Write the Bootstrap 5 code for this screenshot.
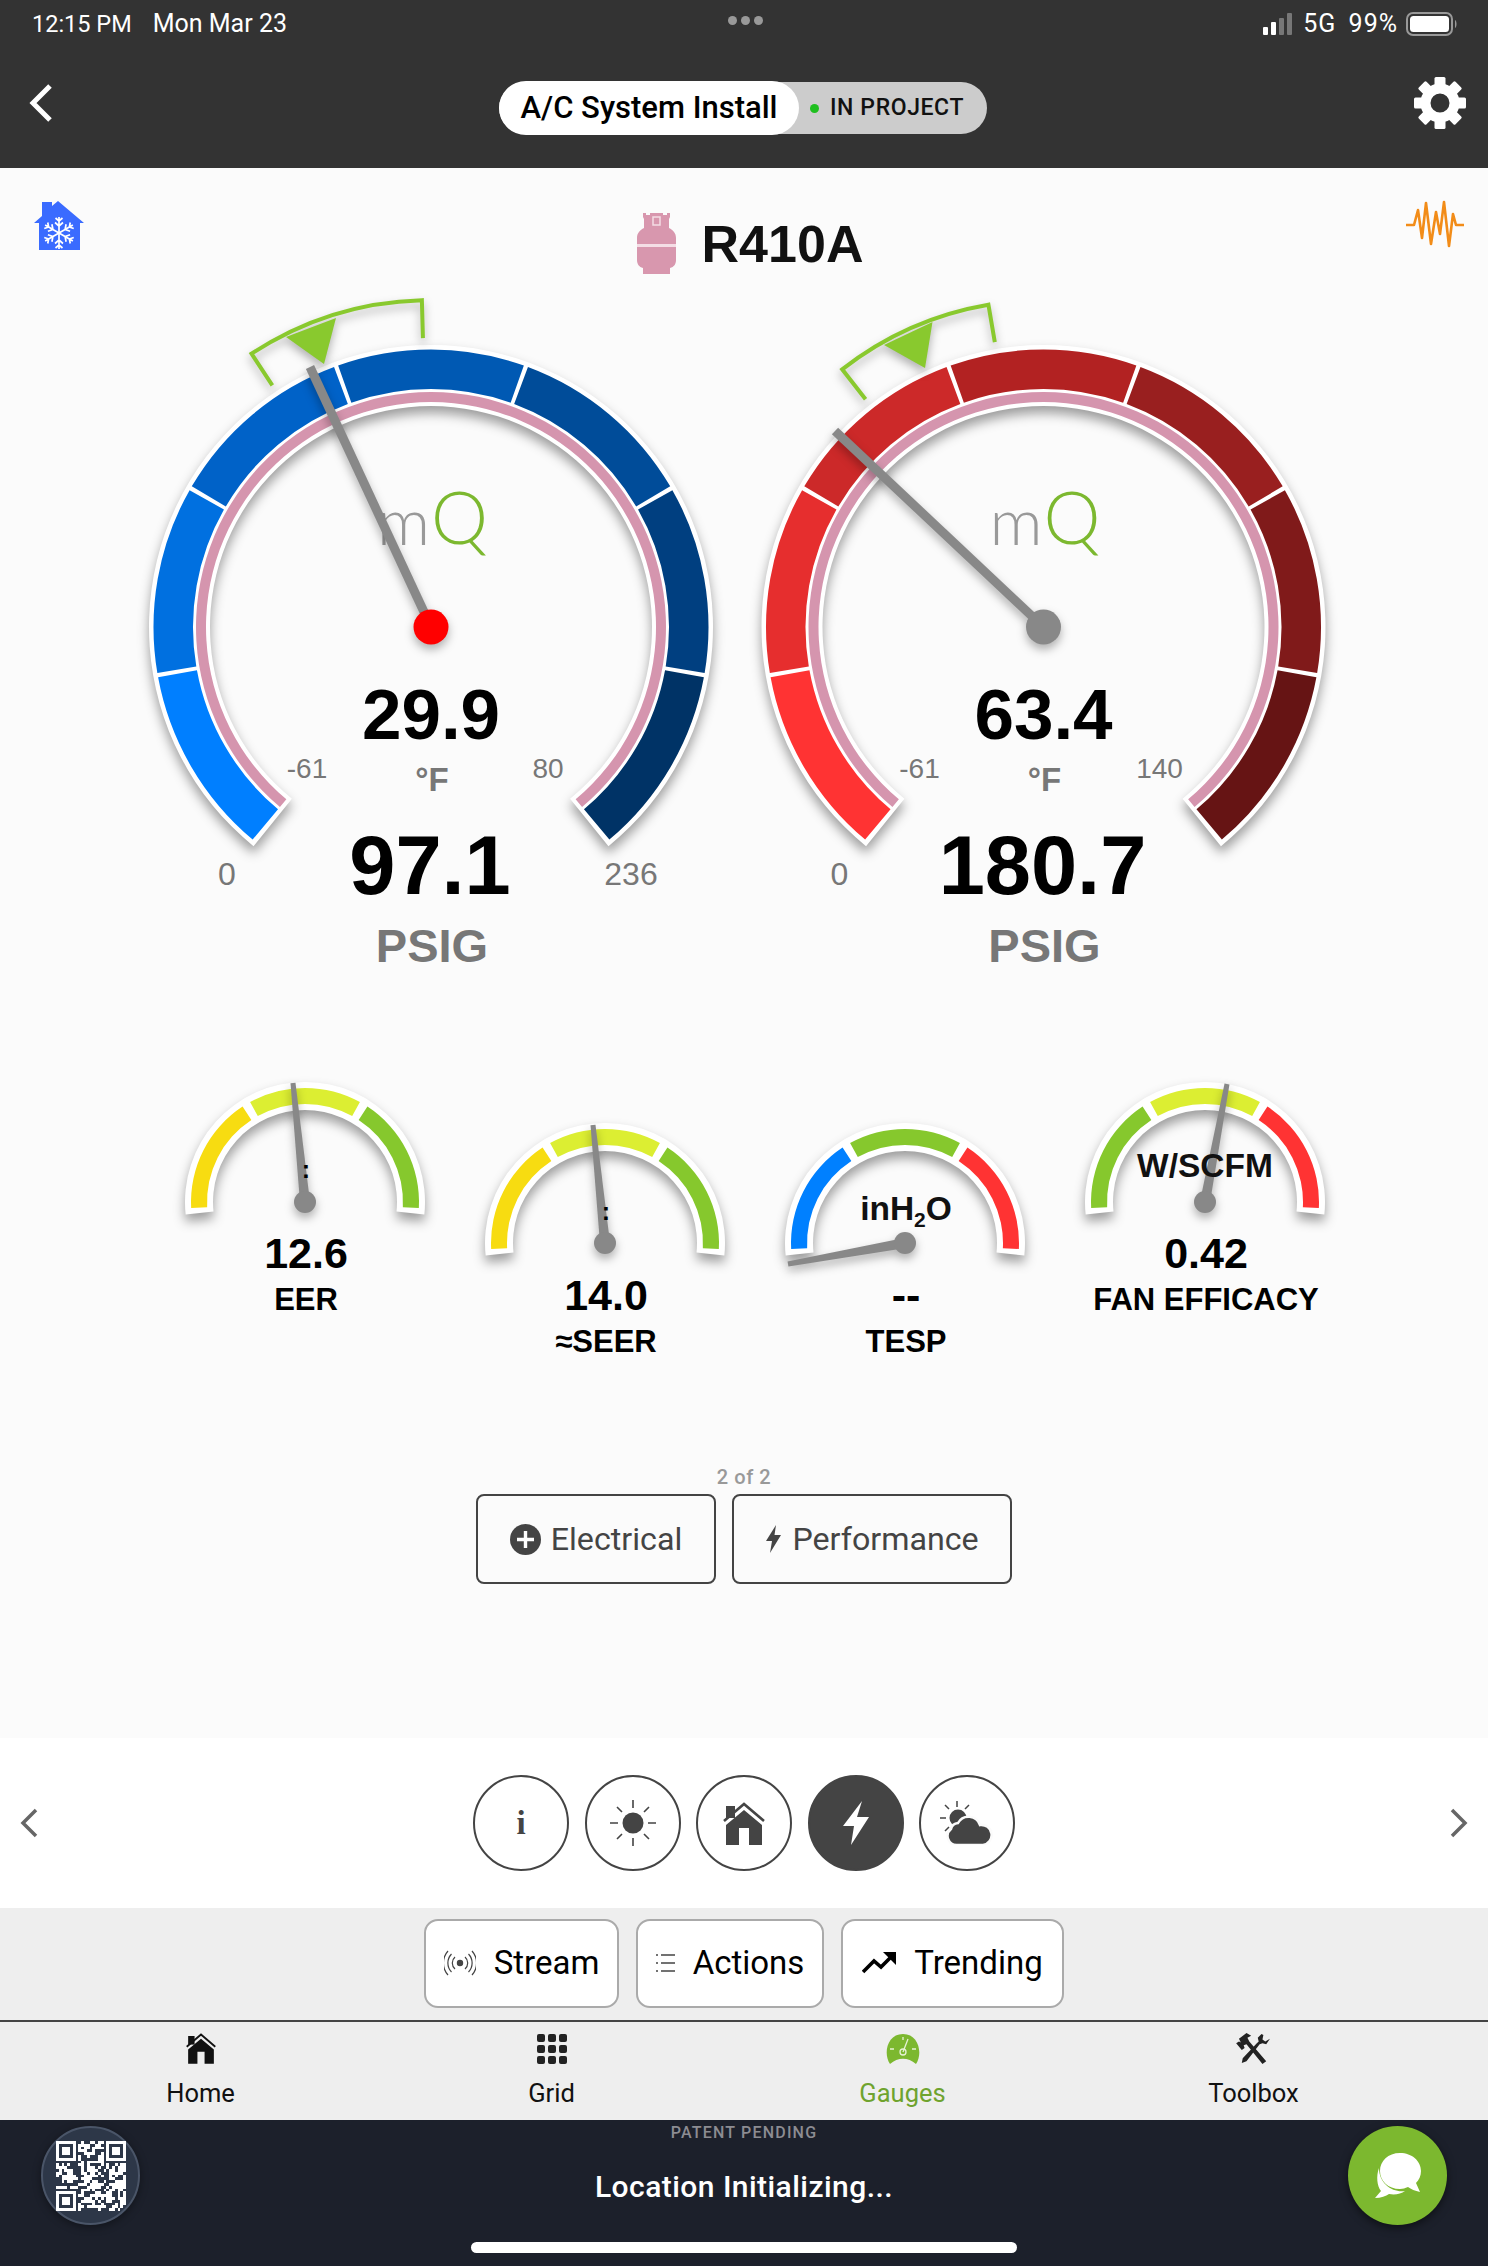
<!DOCTYPE html>
<html lang="en">
<head>
  <meta charset="UTF-8" />
  <meta name="viewport" content="width=device-width, initial-scale=1.0" />
  <title>Gauges</title>
  <link href="https://cdn.jsdelivr.net/npm/bootstrap@5.3.3/dist/css/bootstrap.min.css" rel="stylesheet" />
  <script src="https://cdn.jsdelivr.net/npm/bootstrap@5.3.3/dist/js/bootstrap.bundle.min.js"></script>
  <style>
    html, body { margin: 0; height: 2266px; overflow: hidden; }
    body { font-family: Roboto, "Liberation Sans", sans-serif; background: #fbfbfb; }
    .app-shell { width: 1488px; height: 2266px; }

    .top-bar { height: 168px; background: #333; color: #fff; flex: none; }
    .status-row { height: 48px; padding: 8px 30px 0 32px; font-size: 23.5px; line-height: 32px; }
    .status-time { width: 430px; white-space: pre; }
    .status-date { font-size: 25px; margin-left: 21px; }
    .status-dots { gap: 4px; }
    .status-dots i { width: 9px; height: 9px; border-radius: 50%; background: #999; display: block; }
    .status-right { width: 430px; }
    .status-net { font-size: 25px; letter-spacing: 1px; word-spacing: 5px; }
    .nav-row { height: 120px; padding: 0 22px 0 28px; }
    .nav-back { width: 52px; margin-bottom: 10px; }
    .nav-gear { width: 60px; margin-bottom: 10px; }
    .project-pill { background: #ccc; border-radius: 27px; height: 52px; width: 488px; }
    .project-name { background: #fff; color: #000; border-radius: 27px; height: 54px; width: 300px; font-size: 31px; font-weight: 500; margin: -1px 0; }
    .project-state { font-size: 23px; font-weight: 500; color: #111; letter-spacing: .6px; padding-left: 11px; }
    .project-dot { width: 9px; height: 9px; border-radius: 50%; background: #1fbf1f; margin-right: 11px; }

    .main-area { height: 1570px; background: #fbfbfb; flex: none; }
    .title-row { height: 112px; padding: 32px 24px 0 34px; }
    .title-mid { margin-top: 12px; gap: 25px; margin-left: 9px; }
    .title-text { font-family: "Liberation Sans", sans-serif; font-weight: 700; font-size: 52px; line-height: 60px; color: #111; }
    .big-row { padding-left: 125px; height: 720px; }
    .small-row { padding-left: 155px; margin-top: 60px; height: 310px; }
    .page-count { margin-top: 95px; font-size: 20px; font-weight: 500; color: #999; line-height: 24px; text-align: center; letter-spacing: .6px; }
    .mode-row { gap: 16px; margin-top: 5px; }
    .mode-btn { height: 90px; border: 2px solid #444; border-radius: 8px; color: #444; font-size: 32.2px; background: transparent; padding: 0; gap: 10px; }
    .mode-a { width: 240px; }
    .mode-b { width: 280px; gap: 10px; }

    .circle-bar { height: 170px; background: #fff; gap: 15.5px; padding: 0 18px; flex: none; }
    .circle-set { gap: 15.5px; }
    .round-btn { width: 96px; height: 96px; border: 2px solid #444; border-radius: 50%; background: #fff; color: #444; padding: 0; }
    .round-on { background: #444; }
    .round-i { font-family: "Liberation Serif", serif; font-weight: 700; font-size: 33px; line-height: 1; }

    .action-bar { height: 114px; background: #eee; border-bottom: 2px solid #444; gap: 17px; flex: none; padding-bottom: 2px; }
    .action-btn { height: 89px; background: #fff; border: 2px solid #aaa; border-radius: 14px; color: #000; font-size: 33px; padding: 0; gap: 18px; }
    .act-a { width: 195px; }
    .act-b { width: 188px; }
    .act-c { width: 223px; }

    .tab-bar { height: 98px; background: #eee; padding: 0 59px 0 25px; flex: none; }
    .tab-item { width: 351px; color: #111; font-size: 25.5px; line-height: 30px; padding-top: 11px; gap: 14px; }
    .tab-on { color: #6fa32e; }

    .foot-bar { height: 146px; background: #1c202b; color: #fff; padding: 6px 41px 0; flex: none; }
    .qr-disc { width: 99px; height: 99px; border-radius: 50%; background: #2d3748; border: 2px solid #4a5568; box-shadow: 0 2px 8px rgba(0,0,0,.4); }
    .chat-disc { width: 99px; height: 99px; border-radius: 50%; background: #7cb82f; box-shadow: 0 3px 8px rgba(0,0,0,.5); }
    .foot-mid { width: 546px; }
    .patent-text { font-size: 16px; font-weight: 500; letter-spacing: 1.2px; color: #8c8c92; line-height: 18px; margin-top: -2px; }
    .loc-text { font-size: 30px; font-weight: 500; line-height: 36px; margin-top: 27px; letter-spacing: .45px; }
    .home-bar { width: 546px; height: 11px; border-radius: 6px; background: #fff; margin-top: 37px; }

    .g-text { font-family: "Liberation Sans", sans-serif; text-anchor: middle; }
    .g-bold { font-weight: 700; }
    .g-temp { font-size: 71px; fill: #000; }
    .g-psi { font-size: 83px; fill: #000; }
    .g-unit { font-size: 33px; fill: #777; }
    .g-psig { font-size: 47px; fill: #777; }
    .g-lim { font-size: 32px; fill: #777; }
    .g-lim-sm { font-size: 28px; fill: #777; }
    .logo-m { font-family: Lato, sans-serif; font-weight: 300; font-size: 66px; fill: #999; }
    .logo-q { font-family: Lato, sans-serif; font-weight: 300; font-size: 72px; fill: #7cb82f; }
    .s-val { font-size: 43px; fill: #000; }
    .s-name { font-size: 31px; fill: #000; }
    .s-unit { font-size: 33.5px; fill: #111; }
    .s-sub { font-size: 21px; fill: #111; }
    .s-colon { font-size: 25px; fill: #000; }
    .ring-shadow { filter: drop-shadow(0 7px 6px rgba(0,0,0,.38)); }
    .hand-shadow { filter: drop-shadow(0 5px 5px rgba(0,0,0,.3)); }
  </style>
</head>
<body>
  <svg width="0" height="0" class="d-block position-absolute">
    <symbol id="i-home" viewBox="0 0 42 43">
      <path fill="currentColor" d="M3 43V23L21 8L39 23V43H26V26H16V43Z"/>
      <rect fill="currentColor" x="3" y="4" width="9" height="12"/>
      <path fill="none" stroke="currentColor" stroke-width="2.6" d="M1 19L21 2L41 19"/>
    </symbol>
  </svg>

  <div class="app-shell d-flex flex-column">
    <header class="top-bar">
      <div class="status-row d-flex align-items-start justify-content-between">
        <div class="status-time">12:15 PM<span class="status-date">Mon Mar 23</span></div>
        <div class="status-dots d-flex mt-2"><i></i><i></i><i></i></div>
        <div class="status-right d-flex justify-content-end align-items-center">
          <svg width="32" height="22" viewBox="0 0 32 22">
            <rect x="0" y="14" width="5" height="8" rx="1" fill="#fff"/>
            <rect x="8" y="9" width="5" height="13" rx="1" fill="#fff"/>
            <rect x="16" y="5" width="5" height="17" rx="1" fill="#777"/>
            <rect x="24" y="0" width="5" height="22" rx="1" fill="#777"/>
          </svg>
          <span class="status-net ms-2 me-2">5G 99%</span>
          <svg width="52" height="24" viewBox="0 0 52 24">
            <rect x="1" y="1" width="45" height="22" rx="6" fill="none" stroke="#999" stroke-width="2"/>
            <rect x="4" y="4" width="39" height="16" rx="3.5" fill="#fff"/>
            <path d="M49 8c2 1 2 7 0 8z" fill="#999"/>
          </svg>
        </div>
      </div>
      <div class="nav-row d-flex align-items-center justify-content-between">
        <div class="nav-back">
          <svg class="d-block" width="26" height="40" viewBox="0 0 26 40"><path d="M22 3L5 20L22 37" fill="none" stroke="#fff" stroke-width="5"/></svg>
        </div>
        <div class="project-pill d-flex align-items-center">
          <div class="project-name d-flex align-items-center justify-content-center">A/C System Install</div>
          <div class="project-state d-flex align-items-center"><span class="project-dot"></span>IN PROJECT</div>
        </div>
        <div class="nav-gear d-flex justify-content-end">
          <svg width="52" height="52" viewBox="-26 -26 52 52" fill="#fff">
            <circle r="14.5" fill="none" stroke="#fff" stroke-width="10"/>
            <rect x="-5.5" y="-26" width="11" height="10" rx="1.5"/>
            <rect x="-5.5" y="-26" width="11" height="10" rx="1.5" transform="rotate(45)"/>
            <rect x="-5.5" y="-26" width="11" height="10" rx="1.5" transform="rotate(90)"/>
            <rect x="-5.5" y="-26" width="11" height="10" rx="1.5" transform="rotate(135)"/>
            <rect x="-5.5" y="-26" width="11" height="10" rx="1.5" transform="rotate(180)"/>
            <rect x="-5.5" y="-26" width="11" height="10" rx="1.5" transform="rotate(225)"/>
            <rect x="-5.5" y="-26" width="11" height="10" rx="1.5" transform="rotate(270)"/>
            <rect x="-5.5" y="-26" width="11" height="10" rx="1.5" transform="rotate(315)"/>
          </svg>
        </div>
      </div>
    </header>

    <main class="main-area">
      <div class="title-row d-flex justify-content-between align-items-start">
        <svg width="50" height="50" viewBox="0 0 50 50" id="house-icon"></svg>
        <div class="title-mid d-flex align-items-center">
          <svg width="41" height="64" viewBox="0 0 41 64">
            <path fill="#d897ae" d="M7 1h3v2h4V1h13v2h4V1h3v4l-1 2v9c4 2 7 5 7 10v22c0 4-2 7-6 8v6H7v-6c-4-1-6-4-6-8V26c0-5 3-8 7-10V7L7 5z"/>
            <rect x="1" y="32" width="39" height="3" fill="#f4dde5"/>
            <rect x="17" y="5" width="7" height="8" fill="none" stroke="#f4dde5" stroke-width="1.5"/>
          </svg>
          <div class="title-text">R410A</div>
        </div>
        <svg width="58" height="48" viewBox="0 0 58 48"><path fill="none" stroke="#f28c18" stroke-width="2.6" stroke-linejoin="round" d="M0 25H8L12 10L16 38L20 3L25 44L30 12L34 34L38 2L43 46L47 14L50 25H58"/></svg>
      </div>

      <div class="big-row d-flex" id="big-gauges"></div>
      <div class="small-row d-flex" id="small-gauges"></div>

      <div class="page-count">2 of 2</div>
      <div class="mode-row d-flex justify-content-center">
        <button class="btn mode-btn mode-a d-flex align-items-center justify-content-center">
          <svg width="31" height="31" viewBox="0 0 31 31"><circle cx="15.5" cy="15.5" r="15.5" fill="#444"/><path d="M15.5 7v17M7 15.5h17" stroke="#fff" stroke-width="3.4"/></svg>
          Electrical
        </button>
        <button class="btn mode-btn mode-b d-flex align-items-center justify-content-center">
          <svg width="17" height="28" viewBox="0 0 17 28"><path fill="#444" d="M11 0L1 16H7L5 28L16 10H9.500Z"/></svg>
          Performance
        </button>
      </div>
    </main>

    <div class="circle-bar d-flex align-items-center justify-content-between">
      <svg width="22" height="34" viewBox="0 0 22 34"><path d="M18 4L5 17L18 30" fill="none" stroke="#666" stroke-width="3.500"/></svg>
      <div class="circle-set d-flex">
        <button class="btn round-btn round-i d-flex align-items-center justify-content-center">i</button>
        <button class="btn round-btn d-flex align-items-center justify-content-center">
          <svg width="48" height="48" viewBox="-24 -24 48 48"><circle r="10.500" fill="#444"/><g stroke="#444" stroke-width="1.600"><path d="M0-23v8M0 15v8M-23 0h8M15 0h8M-16-16l5 5M11 11l5 5M-16 16l5-5M11-11l5-5"/></g></svg>
        </button>
        <button class="btn round-btn d-flex align-items-center justify-content-center">
          <svg width="42" height="43" class="round-glyph"><use href="#i-home"/></svg>
        </button>
        <button class="btn round-btn round-on d-flex align-items-center justify-content-center">
          <svg width="26" height="44" viewBox="0 0 26 44"><path fill="#fff" d="M19 0L0 25H11L8 44L26 16H14Z"/></svg>
        </button>
        <button class="btn round-btn d-flex align-items-center justify-content-center">
          <svg width="54" height="44" viewBox="0 0 54 44" fill="#444">
            <circle cx="18" cy="17" r="8.500"/>
            <path stroke="#444" stroke-width="1.500" d="M17 0v6M0 17h6M5 4l4 4M29 4l-4 4M5 30l4-4"/>
            <path stroke="#fbfbfb" stroke-width="2.500" d="M17 44a9 9 0 0 1-6-16 8 8 0 0 1 7-6 12 12 0 0 1 22 2 10 10 0 0 1 3 20z"/>
          </svg>
        </button>
      </div>
      <svg width="22" height="34" viewBox="0 0 22 34"><path d="M4 4L17 17L4 30" fill="none" stroke="#666" stroke-width="3.500"/></svg>
    </div>

    <div class="action-bar d-flex align-items-center justify-content-center">
      <button class="btn action-btn act-a d-flex align-items-center justify-content-center">
        <svg width="32" height="26" viewBox="0 0 32 26" fill="none" stroke="#444" stroke-width="1.200">
          <circle cx="16" cy="13" r="2.600" fill="#444"/>
          <path d="M11 7a8 8 0 0 0 0 12M21 7a8 8 0 0 1 0 12M7.500 4a13 13 0 0 0 0 18M24.500 4a13 13 0 0 1 0 18M4 1a18 18 0 0 0 0 24M28 1a18 18 0 0 1 0 24"/>
        </svg>
        Stream
      </button>
      <button class="btn action-btn act-b d-flex align-items-center justify-content-center">
        <svg width="19" height="20" viewBox="0 0 19 20" stroke="#444" stroke-width="1.400" fill="none">
          <path d="M5 2h14M5 10h14M5 18h14M0 2h2M0 10h2M0 18h2"/>
        </svg>
        Actions
      </button>
      <button class="btn action-btn act-c d-flex align-items-center justify-content-center">
        <svg width="34" height="22" viewBox="0 0 34 22"><path fill="none" stroke="#000" stroke-width="3.600" d="M1 20L12 9L19 15L31 3"/><path d="M21 0H34V13Z"/></svg>
        Trending
      </button>
    </div>

    <nav class="tab-bar d-flex">
      <div class="tab-item d-flex flex-column align-items-center">
        <svg width="30" height="31"><use href="#i-home"/></svg>
        <span>Home</span>
      </div>
      <div class="tab-item d-flex flex-column align-items-center">
        <svg width="30" height="31" viewBox="0 0 30 31" fill="#222">
          <rect x="0" y="1" width="8" height="8" rx="2"/><rect x="11" y="1" width="8" height="8" rx="2"/><rect x="22" y="1" width="8" height="8" rx="2"/>
          <rect x="0" y="12" width="8" height="8" rx="2"/><rect x="11" y="12" width="8" height="8" rx="2"/><rect x="22" y="12" width="8" height="8" rx="2"/>
          <rect x="0" y="23" width="8" height="8" rx="2"/><rect x="11" y="23" width="8" height="8" rx="2"/><rect x="22" y="23" width="8" height="8" rx="2"/>
        </svg>
        <span>Grid</span>
      </div>
      <div class="tab-item tab-on d-flex flex-column align-items-center">
        <svg width="34" height="31" viewBox="0 0 34 31">
          <path fill="#7cb82f" d="M4 31C-3 21 1 1 17 1s20 20 13 30c-8-7-18-7-26 0z"/>
          <path fill="none" stroke="#e6f2d4" stroke-width="1.300" d="M22 6L17 19M4 16h4M26 16h4M17 4v3"/>
          <circle cx="17" cy="19" r="3" fill="none" stroke="#e6f2d4" stroke-width="1.300"/>
        </svg>
        <span>Gauges</span>
      </div>
      <div class="tab-item d-flex flex-column align-items-center">
        <svg width="38" height="31" viewBox="0 0 38 33" fill="#222">
          <path d="M28 2l-4 4 1 4-2 2L8 28l-1 5 5-2 14-18 3-1 4 1 4-6-5 3-3-2 1-5z" transform="translate(-1 -1)"/>
          <path d="M3 6L11 0l5 3-4 2 2 4 18 21-4 3L11 12l-3 1 1 3-3 2-6-7 3-2 2 1z"/>
        </svg>
        <span>Toolbox</span>
      </div>
    </nav>

    <footer class="foot-bar d-flex justify-content-between align-items-start">
      <div class="qr-disc d-flex align-items-center justify-content-center" id="qr-box"></div>
      <div class="foot-mid d-flex flex-column align-items-center">
        <div class="patent-text">PATENT PENDING</div>
        <div class="loc-text">Location Initializing...</div>
        <div class="home-bar"></div>
      </div>
      <div class="chat-disc d-flex align-items-center justify-content-center">
        <svg width="50" height="48" viewBox="0 0 50 48">
          <path fill="#fff" d="M6 16C3 24 4 34 8 39L2 46c6 0 11-2 14-4 6 1 12 0 16-3C20 41 6 32 6 16z"/>
          <path fill="#fff" d="M27 1c12 0 21 8 21 18 0 5-2 9-5 12l4 9c-5-1-9-3-12-5-3 1-5 2-8 2C15 37 7 29 7 19S15 1 27 1z"/>
        </svg>
      </div>
    </footer>
  </div>

  <script>
    function polar(cx, cy, r, deg) {
      let a = deg * Math.PI / 180;
      return (cx + r * Math.sin(a)).toFixed(2) + ' ' + (cy - r * Math.cos(a)).toFixed(2);
    }

    function sector(cx, cy, r1, r2, from, to) {
      let large = to - from > 180 ? 1 : 0;
      return `M${polar(cx, cy, r2, from)}A${r2} ${r2} 0 ${large} 1 ${polar(cx, cy, r2, to)}` +
             `L${polar(cx, cy, r1, to)}A${r1} ${r1} 0 ${large} 0 ${polar(cx, cy, r1, from)}Z`;
    }

    function bracket(cx, cy, from, to) {
      return `M${polar(cx, cy, 289, from)}L${polar(cx, cy, 327, from)}A327 327 0 0 1 ${polar(cx, cy, 327, to)}L${polar(cx, cy, 289, to)}`;
    }

    function bigGauge(g) {
      let cx = g.cx, cy = 627, segs = '';
      g.colors.forEach((c, i) => {
        let from = -140 + i * 40, to = from + 40;
        segs += `<path d="${sector(cx, cy, 238, 277.500, from + (i ? .45 : 0), to - (i < 6 ? .45 : 0))}" fill="${c}"/>`;
      });
      return `
        <svg width="612" height="720" viewBox="${g.vx} 280 612 720">
          <g class="ring-shadow"><path d="${sector(cx, cy, 221, 282, -141, 141)}" fill="#fff"/></g>
          ${segs}
          <path d="${sector(cx, cy, 225, 235, -140, 140)}" fill="#d595ae"/>
          <text class="logo-m" x="${cx - 54}" y="545">m</text>
          <text class="logo-q" x="${cx}" y="544">Q</text>
          <g class="hand-shadow">
            <path d="${bracket(cx, cy, g.arc[0], g.arc[1])}" fill="none" stroke="#89c92e" stroke-width="4"/>
            <path d="${g.mark}" fill="#89c92e"/>
          </g>
          <g class="hand-shadow">
            <path d="M${g.tip}L${cx} ${cy}" stroke="#888" stroke-width="9"/>
            <circle cx="${cx}" cy="${cy}" r="17.500" fill="${g.hub}"/>
          </g>
          <text class="g-text g-bold g-temp" x="${cx}" y="739">${g.temp}</text>
          <text class="g-text g-bold g-unit" x="${cx + 1}" y="791">°F</text>
          <text class="g-text g-lim-sm" x="${cx - 124}" y="778">-61</text>
          <text class="g-text g-lim-sm" x="${cx + g.hiX}" y="778">${g.hi}</text>
          <text class="g-text g-lim" x="${cx - 204}" y="885">0</text>
          <text class="g-text g-lim" x="${cx + 200}" y="885">${g.max}</text>
          <text class="g-text g-bold g-psi" x="${cx - 1}" y="894">${g.psi}</text>
          <text class="g-text g-bold g-psig" x="${cx + 1}" y="962">PSIG</text>
        </svg>`;
    }

    function smallGauge(g) {
      let cx = g.cx, cy = g.cy, bands = '';
      g.colors.forEach((c, i) => {
        let from = -93 + i * 62, to = from + 62;
        bands += `<path d="${sector(cx, cy, 98, 114, from + (i ? 2.2 : 0), to - (i < 2 ? 2.2 : 0))}" fill="${c}"/>`;
      });
      let dx = g.tip[0] - cx, dy = g.tip[1] - cy, len = Math.hypot(dx, dy);
      let nx = -dy / len, ny = dx / len;
      let hand = `M${g.tip[0] + nx * 2.5} ${g.tip[1] + ny * 2.5}L${cx + nx * 5} ${cy + ny * 5}L${cx - nx * 5} ${cy - ny * 5}L${g.tip[0] - nx * 2.5} ${g.tip[1] - ny * 2.5}Z`;
      return `
        <svg width="300" height="310" viewBox="${cx - 150} 1060 300 310">
          <g class="ring-shadow"><path d="${sector(cx, cy, 92, 120, -96, 96)}" fill="#fff"/></g>
          ${bands}
          <g class="hand-shadow"><path d="${hand}" fill="#888"/><circle cx="${cx}" cy="${cy}" r="11" fill="#888"/></g>
          ${g.unit}
          <text class="g-text g-bold s-val" x="${cx + 1}" y="${g.vy}">${g.val}</text>
          <text class="g-text g-bold s-name" x="${cx + 1}" y="${g.ny}">${g.name}</text>
        </svg>`;
    }

    document.getElementById('big-gauges').innerHTML =
      bigGauge({
        cx: 431, vx: 125, temp: '29.9', psi: '97.1', hi: '80', hiX: 117, max: '236', hub: '#f00',
        colors: ['#007fff', '#0070e0', '#0062c8', '#0059b3', '#004c99', '#003f80', '#003366'],
        tip: '310 367', arc: [-33.300, -1.600], mark: 'M286 337L336 318L324 364Z'
      }) +
      bigGauge({
        cx: 1043.500, vx: 737, temp: '63.4', psi: '180.7', hi: '140', hiX: 116, max: '', hub: '#888',
        colors: ['#ff3333', '#e62e2e', '#cc2929', '#b22222', '#991f1f', '#801a1a', '#661414'],
        tip: '835 431', arc: [-38, -9.700], mark: 'M884 345L932.500 322L925 368Z'
      });

    let yel = '#f7dc11', lime = '#dcee32', grn = '#86c82d', blu = '#0080ff', red = '#ff3333';
    document.getElementById('small-gauges').innerHTML =
      smallGauge({ cx: 305, cy: 1202, tip: [293, 1083], colors: [yel, lime, grn], val: '12.6', name: 'EER', vy: 1268, ny: 1310,
        unit: '<text class="g-text g-bold s-colon" x="306" y="1178">:</text>' }) +
      smallGauge({ cx: 605, cy: 1243, tip: [593, 1125], colors: [yel, lime, grn], val: '14.0', name: '≈SEER', vy: 1310, ny: 1352,
        unit: '<text class="g-text g-bold s-colon" x="606" y="1220">:</text>' }) +
      smallGauge({ cx: 905, cy: 1243, tip: [788, 1264], colors: [blu, grn, red], val: '--', name: 'TESP', vy: 1310, ny: 1352,
        unit: '<text class="g-text g-bold s-unit" x="906" y="1220">inH<tspan class="s-sub" dy="7">2</tspan><tspan dy="-7">O</tspan></text>' }) +
      smallGauge({ cx: 1205, cy: 1202, tip: [1227, 1084], colors: [grn, lime, red], val: '0.42', name: 'FAN EFFICACY', vy: 1268, ny: 1310,
        unit: '<text class="g-text g-bold s-unit" x="1205" y="1177">W/SCFM</text>' });

    // house with snowflake
    let flake = '';
    for (let i = 0; i < 6; i++) {
      flake += `<g transform="rotate(${i * 60} 25 33)"><path d="M25 33V17M25 21l-3.500-3M25 21l3.500-3M25 26l-4-3.500M25 26l4-3.500" stroke="#fff" stroke-width="1.700" fill="none"/></g>`;
    }
    document.getElementById('house-icon').innerHTML =
      `<path fill="#3a6bff" d="M8 2H18V6L24 1L50 23H46V50H5V23H0L8 16Z"/>` + flake;

    // qr code, fixed seed so it renders the same every time
    let seed = 7, cells = '';
    function rnd() { seed = (seed * 16807) % 2147483647; return seed / 2147483647; }
    let size = 25, unit = 2.8;
    function inFinder(x, y) {
      return (x < 8 && y < 8) || (x > 16 && y < 8) || (x < 8 && y > 16);
    }
    for (let y = 0; y < size; y++) {
      for (let x = 0; x < size; x++) {
        if (!inFinder(x, y) && rnd() > .48) {
          cells += `<rect x="${x * unit}" y="${y * unit}" width="${unit}" height="${unit}"/>`;
        }
      }
    }
    [[0, 0], [18, 0], [0, 18]].forEach(p => {
      let px = p[0] * unit, py = p[1] * unit;
      cells += `<path fill-rule="evenodd" d="M${px} ${py}h${7 * unit}v${7 * unit}h${-7 * unit}zM${px + unit} ${py + unit}v${5 * unit}h${5 * unit}v${-5 * unit}z"/>` +
               `<rect x="${px + 2 * unit}" y="${py + 2 * unit}" width="${3 * unit}" height="${3 * unit}"/>`;
    });
    document.getElementById('qr-box').innerHTML = `<svg width="70" height="70" viewBox="0 0 70 70" fill="#fff" shape-rendering="crispEdges">${cells}</svg>`;
  </script>
</body>
</html>
